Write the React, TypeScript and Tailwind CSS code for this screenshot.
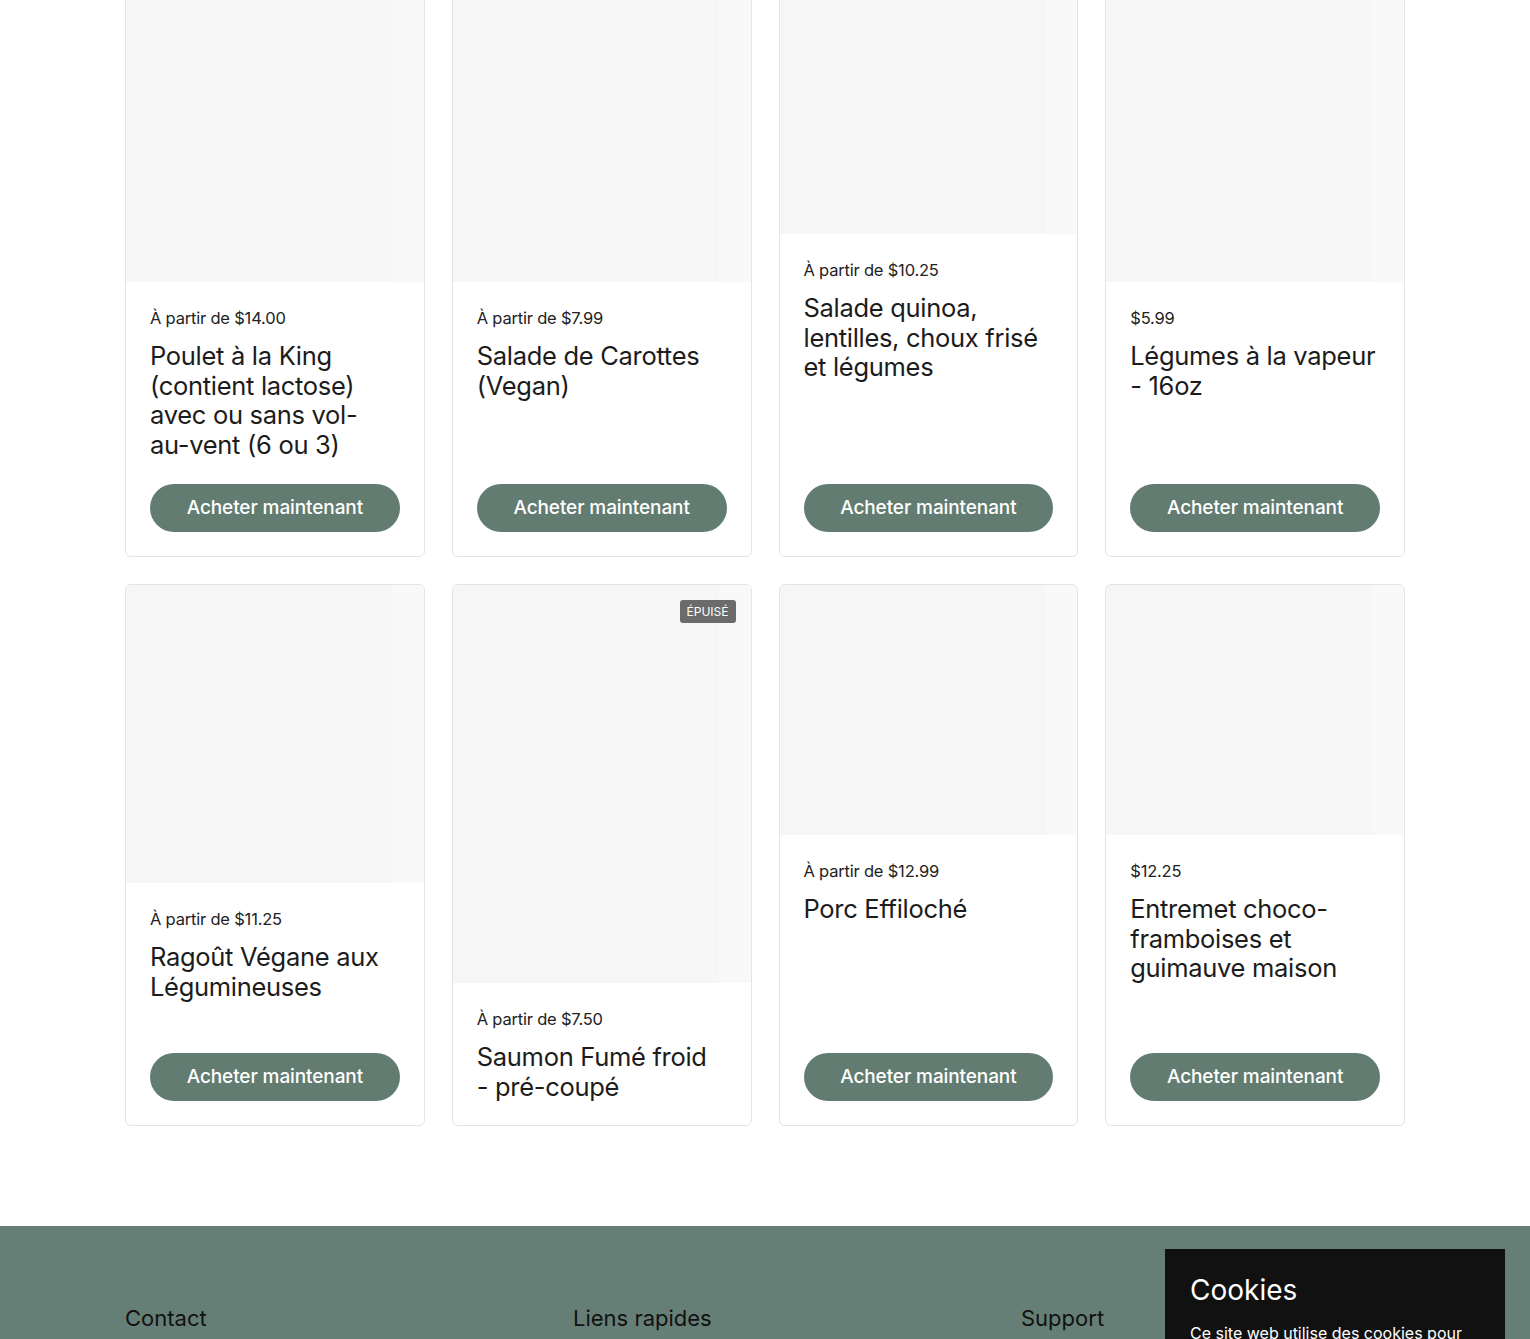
import React from 'react';

interface Product {
  title: React.ReactNode;
  price: string;
  imageH: string;
  soldOut?: boolean;
}

const products: Product[] = [
  {
    title: (
      <>
        Poulet à la King (contient lactose) avec ou sans vol-<span className="whitespace-nowrap">au-vent</span> (6 ou 3)
      </>
    ),
    price: 'À partir de $14.00',
    imageH: 'h-[298px]',
  },
  { title: 'Salade de Carottes (Vegan)', price: 'À partir de $7.99', imageH: 'h-[298px]' },
  { title: 'Salade quinoa, lentilles, choux frisé et légumes', price: 'À partir de $10.25', imageH: 'h-[250px]' },
  {
    title: (
      <>
        Légumes à la vapeur <span className="whitespace-nowrap">- 16oz</span>
      </>
    ),
    price: '$5.99',
    imageH: 'h-[298px]',
  },
  { title: 'Ragoût Végane aux Légumineuses', price: 'À partir de $11.25', imageH: 'h-[298px]' },
  {
    title: (
      <>
        Saumon Fumé froid <span className="whitespace-nowrap">- pré-coupé</span>
      </>
    ),
    price: 'À partir de $7.50',
    imageH: 'h-[398px]',
    soldOut: true,
  },
  { title: 'Porc Effiloché', price: 'À partir de $12.99', imageH: 'h-[250px]' },
  { title: 'Entremet choco-framboises et guimauve maison', price: '$12.25', imageH: 'h-[250px]' },
];

const ProductCard: React.FC<{ product: Product }> = ({ product }) => {
  return (
    <div className="relative flex flex-col overflow-hidden rounded-[6px] border border-[#e4e4e4] bg-white">
      {/* placeholder image */}
      <div className={`flex w-full shrink-0 ${product.imageH} bg-[#f6f6f6]`}>
        <div className="flex-1" />
        <div className="w-[32px] bg-[#f9f9f9]" />
      </div>

      {product.soldOut && (
        <span className="absolute right-[15px] top-[15px] rounded-[3px] bg-[#6b6b6b] px-[7px] py-[4px] text-[12px] leading-[15px] text-white">
          ÉPUISÉ
        </span>
      )}

      <div className="flex flex-1 flex-col px-6 pb-6 pt-6">
        <p className="text-[16.5px] leading-6 tracking-[-0.2px] text-[#222]">{product.price}</p>
        <h3 className="mt-[11px] text-[25.5px] leading-[29.5px] tracking-[-0.3px] text-[#1c1c1c]">
          {product.title}
        </h3>
        {!product.soldOut && (
          <div className="mt-auto pt-[25px]">
            <button className="h-12 w-full rounded-full bg-[#627c71] text-[19px] font-medium tracking-[-0.1px] text-white">
              Acheter maintenant
            </button>
          </div>
        )}
      </div>
    </div>
  );
};

export default function App() {
  return (
    <div
      className="relative h-[1339px] overflow-hidden bg-white"
      style={{ fontFamily: 'Inter, "Noto Sans", sans-serif' }}
    >
      <main className="mx-auto -mt-[17px] w-[1280px] pb-[100px]">
        <div className="grid grid-cols-4 gap-[27px]">
          {products.map((p, i) => (
            <ProductCard key={i} product={p} />
          ))}
        </div>
      </main>

      <footer className="bg-[#667f76] pb-16 pt-[78px]">
        <div className="mx-auto grid w-[1280px] grid-cols-3 gap-16">
          <h4 className="text-[22px] leading-7 text-[#111]">Contact</h4>
          <h4 className="text-[22px] leading-7 text-[#111]">Liens rapides</h4>
          <h4 className="text-[22px] leading-7 text-[#111]">Support</h4>
        </div>
      </footer>

      {/* Cookie banner */}
      <div className="absolute right-[25px] top-[1249px] w-[340px] bg-[#111] px-[25px] pb-6 pt-6 text-white">
        <h2 className="text-[28px] leading-[34px]">Cookies</h2>
        <p className="mt-[14px] text-[16px] leading-6">
          Ce site web utilise des cookies pour vous garantir la meilleure expérience.
        </p>
      </div>
    </div>
  );
}
